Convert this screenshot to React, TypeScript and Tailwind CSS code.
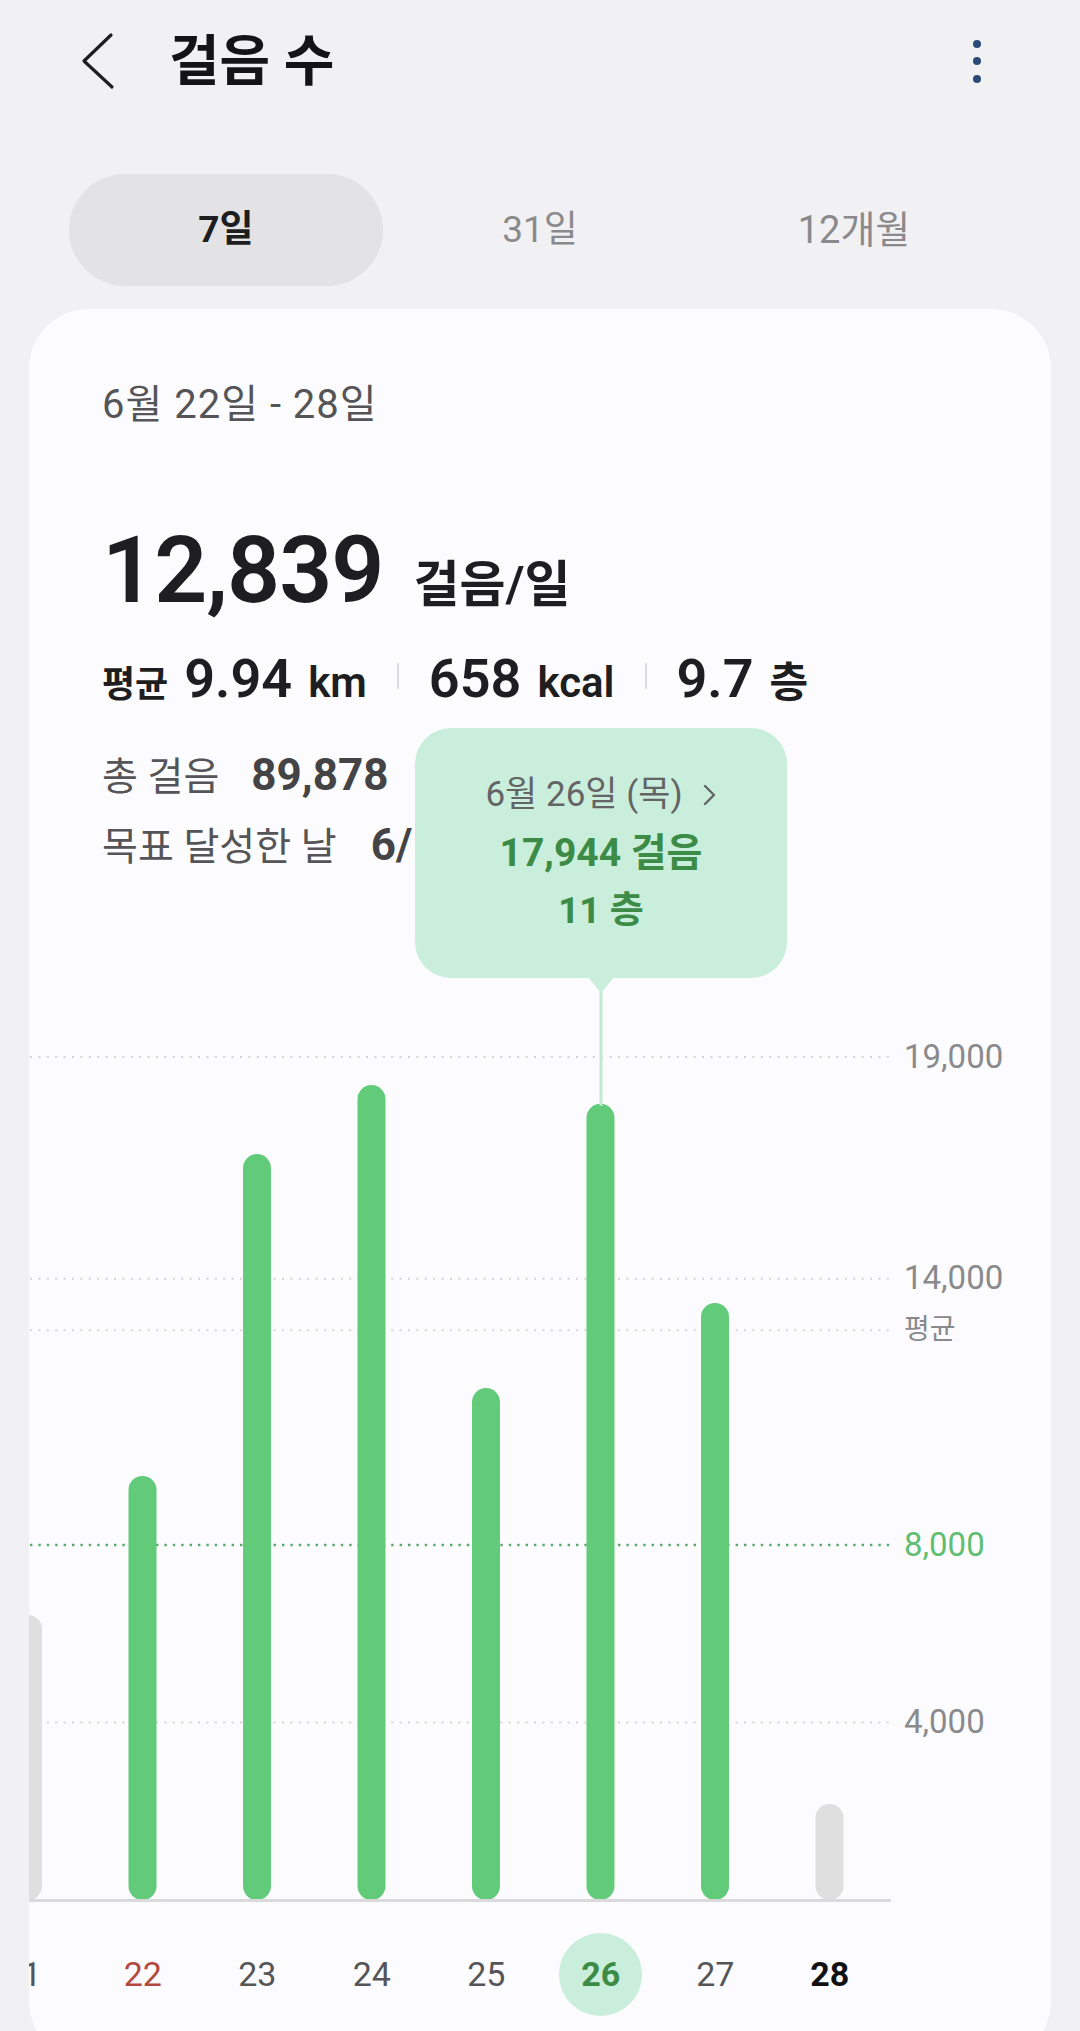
import React from "react";

const FONT = "font-['Roboto','Noto_Sans_CJK_KR',sans-serif]";

// px per step: 19,000 at 148, 0 at 991 (chart coordinates)
const BASE = 991;
const K = (991 - 148) / 19000;
const y = (v: number) => BASE - v * K;

const bars = [
  { v: 6423, gray: true },
  { v: 9556 },
  { v: 16813 },
  { v: 18368 },
  { v: 11539 },
  { v: 17944 },
  { v: 13455 },
  { v: 2164, gray: true },
];
const STEP = 114.5;
const X0 = -1;

function Chart() {
  const gridGray = [19000, 14000, 12839, 4000];
  return (
    <div className="relative h-[1120px] mt-[37px]">
      <svg className="absolute left-0 top-0" width={1022} height={1120} viewBox="0 0 1022 1120">
        {gridGray.map((g) => (
          <line
            key={g}
            x1={1}
            x2={862}
            y1={y(g)}
            y2={y(g)}
            stroke="#d6d6d8"
            strokeWidth={2}
            strokeDasharray="2 6.4"
          />
        ))}
        <line x1={1} x2={862} y1={y(8000)} y2={y(8000)} stroke="#5aa96b" strokeWidth={2.4} strokeDasharray="2.4 6" />
        {bars.map((b, i) => {
          const cx = X0 + STEP * i;
          const top = y(b.v);
          return (
            <rect
              key={i}
              x={cx - 14}
              y={top}
              width={28}
              height={BASE - top}
              rx={14}
              fill={b.gray ? "#dfdfe0" : "#62cb79"}
            />
          );
        })}
        <rect x={0} y={990} width={862} height={3} fill="#dadadc" />
        {/* tooltip connector */}
        <rect x={570.5} y={76} width={3} height={y(17944) - 74} fill="#c3e9d3" />
        <polygon points="559,68 585,68 572,84" fill="#c9eedb" />
      </svg>

      {/* y-axis labels */}
      <div className="absolute left-[875px] top-[128px] h-[40px] leading-[40px] text-[33px] text-[#8a8a8c]">19,000</div>
      <div className="absolute left-[875px] top-[349px] h-[40px] leading-[40px] text-[33px] text-[#8a8a8c]">14,000</div>
      <div className="absolute left-[875px] top-[401px] h-[40px] leading-[40px] text-[28px] text-[#8a8a8c]">평균</div>
      <div className="absolute left-[875px] top-[616px] h-[40px] leading-[40px] text-[33px] text-[#5fbe72]">8,000</div>
      <div className="absolute left-[875px] top-[793px] h-[40px] leading-[40px] text-[33px] text-[#8a8a8c]">4,000</div>

      {/* day labels */}
      <div className="absolute left-[-58px] top-[1023px] h-[84px] w-[916px] grid grid-cols-8">
        <div className="flex items-center justify-center pr-[12px] text-[34px] text-[#555557]">21</div>
        <div className="flex items-center justify-center text-[34px] text-[#b4493f]">22</div>
        <div className="flex items-center justify-center text-[34px] text-[#555557]">23</div>
        <div className="flex items-center justify-center text-[34px] text-[#555557]">24</div>
        <div className="flex items-center justify-center text-[34px] text-[#555557]">25</div>
        <div className="flex items-center justify-center">
          <div className="w-[83px] h-[83px] rounded-full bg-[#c9eedb] flex items-center justify-center text-[34px] font-bold text-[#3c8b46]">
            26
          </div>
        </div>
        <div className="flex items-center justify-center text-[34px] text-[#555557]">27</div>
        <div className="flex items-center justify-center text-[34px] font-bold text-[#111]">28</div>
      </div>

      {/* tooltip */}
      <div className="absolute left-[386px] top-[-181px] w-[372px] h-[250px] rounded-[36px] bg-[#c9eedb] flex flex-col items-center pt-[38px]">
        <div className="flex items-center h-[58px] text-[35px] text-[#646466] leading-[58px]">
          <span>6월 26일 (목)</span>
          <svg className="ml-[20px]" width="14" height="22" viewBox="0 0 14 22">
            <path d="M2 2 L11 11 L2 20" fill="none" stroke="#646466" strokeWidth="2.4" strokeLinecap="round" strokeLinejoin="round" />
          </svg>
        </div>
        <div className="h-[58px] leading-[58px] text-[39px] font-bold text-[#3c8b46]">17,944 걸음</div>
        <div className="h-[58px] leading-[58px] text-[37px] font-bold text-[#3c8b46]">11 층</div>
      </div>
    </div>
  );
}

export default function App() {
  return (
    <div className={`${FONT} w-[1080px] h-[2031px] overflow-hidden bg-[#f1f1f3]`}>
      {/* header */}
      <div className="flex items-center h-[122px]">
        <svg className="ml-[80px]" width="36" height="58" viewBox="0 0 36 58">
          <path d="M31 3 L4 29 L32 55" fill="none" stroke="#1e1e20" strokeWidth="3.2" strokeLinecap="round" strokeLinejoin="round" />
        </svg>
        <div className="ml-[53px] text-[55px] font-bold text-[#141416] leading-none">걸음 수</div>
        <div className="ml-auto mr-[99px] flex flex-col gap-[9.5px]">
          <div className="w-[8px] h-[8px] rounded-full bg-[#2c4a78]" />
          <div className="w-[8px] h-[8px] rounded-full bg-[#2c4a78]" />
          <div className="w-[8px] h-[8px] rounded-full bg-[#2c4a78]" />
        </div>
      </div>

      {/* tabs */}
      <div className="mx-[69px] mt-[52px] h-[112px] grid grid-cols-3">
        <div className="rounded-full bg-[#e3e3e5] flex items-center justify-center text-[37px] font-bold text-[#1e1e20]">7일</div>
        <div className="flex items-center justify-center text-[37px] text-[#8a8a8c]">31일</div>
        <div className="flex items-center justify-center text-[38px] text-[#8a8a8c]">12개월</div>
      </div>

      {/* card */}
      <div className="mx-[29px] mt-[23px] h-[1752px] rounded-[60px] bg-[#fcfcfe] overflow-hidden pt-[72px]">
        <div className="pl-[73px]">
          <div className="text-[40px] leading-[48px] text-[#555557] tracking-[1px]">6월 22일 - 28일</div>

          <div className="mt-[92px] flex items-baseline leading-[100px]">
            <span className="text-[93px] font-semibold text-[#1e1e20] tracking-[-1px]">12,839</span>
            <span className="ml-[30px] text-[50px] font-semibold text-[#1e1e20] leading-none">걸음/일</span>
          </div>

          <div className="mt-[28px] text-[54px] leading-[60px] whitespace-nowrap text-[#1e1e20]">
            <span className="text-[36px] font-bold leading-none">평균</span>
            <span className="ml-[16px] font-semibold leading-none">9.94</span>
            <span className="ml-[16px] text-[42px] font-semibold leading-none">km</span>
            <span className="inline-block mx-[30px] w-[2px] h-[26px] bg-[#dadadc] align-[8px]" />
            <span className="font-semibold leading-none">658</span>
            <span className="ml-[16px] text-[42px] font-semibold leading-none">kcal</span>
            <span className="inline-block mx-[30px] w-[2px] h-[26px] bg-[#dadadc] align-[8px]" />
            <span className="font-semibold leading-none">9.7</span>
            <span className="ml-[16px] text-[42px] font-semibold leading-none">층</span>
          </div>

          <div className="mt-[41px] text-[39px] leading-[50px] whitespace-nowrap">
            <span className="text-[#555557]">총 걸음</span>
            <span className="ml-[32px] text-[44px] font-bold text-[#444446]">89,878</span>
          </div>
          <div className="mt-[18px] text-[39px] leading-[50px] whitespace-nowrap">
            <span className="text-[#555557]">목표 달성한 날</span>
            <span className="ml-[34px] text-[44px] font-bold text-[#444446]">
              6/<span className="ml-[12px]">7</span>
            </span>
          </div>
        </div>

        <Chart />
      </div>
    </div>
  );
}
